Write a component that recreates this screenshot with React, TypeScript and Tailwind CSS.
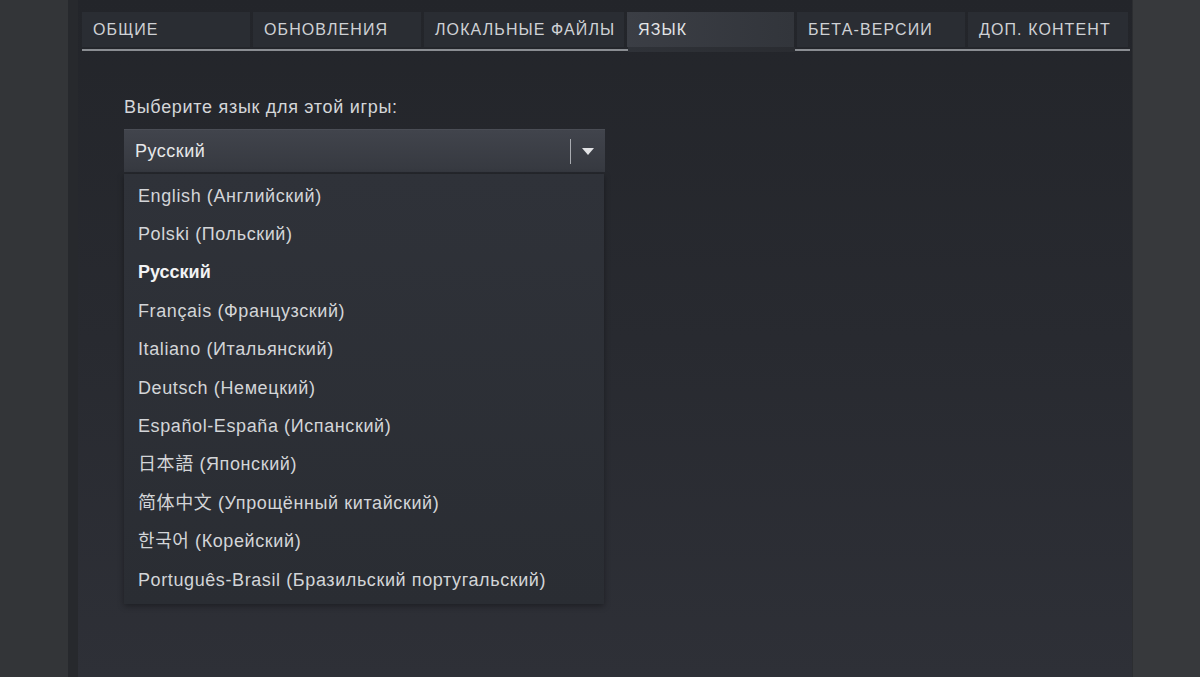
import React from "react";

const tabs = [
  { label: "ОБЩИЕ", w: "w-[168px]" },
  { label: "ОБНОВЛЕНИЯ", w: "w-[168px]" },
  { label: "ЛОКАЛЬНЫЕ ФАЙЛЫ", w: "w-[200px]" },
  { label: "ЯЗЫК", w: "w-[167px]", active: true },
  { label: "БЕТА-ВЕРСИИ", w: "w-[168px]" },
  { label: "ДОП. КОНТЕНТ", w: "w-[160px]" },
];

const langs: { t: string; bold?: boolean }[] = [
  { t: "English (Английский)" },
  { t: "Polski (Польский)" },
  { t: "Русский", bold: true },
  { t: "Français (Французский)" },
  { t: "Italiano (Итальянский)" },
  { t: "Deutsch (Немецкий)" },
  { t: "Español-España (Испанский)" },
  { t: "日本語 (Японский)" },
  { t: "简体中文 (Упрощённый китайский)" },
  { t: "한국어 (Корейский)" },
  { t: "Português-Brasil (Бразильский португальский)" },
];

export default function App() {
  return (
    <div
      className="w-[1200px] h-[677px] flex overflow-hidden bg-[#333538]"
      style={{ fontFamily: '"Liberation Sans", Arial, "Noto Sans CJK SC", "Noto Sans CJK KR", sans-serif' }}
    >
      <div className="w-[68px] shrink-0 bg-[#333538]" />
      <div className="w-[1064px] shrink-0 h-full flex flex-col bg-gradient-to-b from-[#23252a] via-[#282a30] to-[#2e3037] border-l-[10px] border-[#27292d]">
        <div className="pt-[12px] pl-[4px] pr-[2px]">
          <div className="flex gap-[3px]">
            {tabs.map((t) => (
              <div
                key={t.label}
                className={`${t.w} shrink-0 h-[35px] flex items-center pl-[11px] text-[16px] tracking-[1.1px] ${
                  t.active
                    ? "bg-gradient-to-r from-[#3b3e45] to-[#32353b] text-[#e4e5e7]"
                    : "bg-[#2a2d33] text-[#cfd1d5]"
                }`}
              >
                {t.label}
              </div>
            ))}
          </div>
          <div className="flex h-[5px]">
            <div className="w-[546px] h-[2px] mt-[2px] bg-[#8a8d92]" />
            <div className="w-[167px] h-[5px] bg-gradient-to-r from-[#2f3238] to-[#2a2c31]" />
            <div className="flex-1 h-[2px] mt-[2px] bg-[#8a8d92]" />
          </div>
        </div>
        <div className="pl-[46px] pt-[45px]">
          <div className="text-[18px] text-[#d4d6d9] tracking-[0.7px] leading-[20px]">Выберите язык для этой игры:</div>
          <div className="mt-[12px] w-[481px] h-[43px] flex items-center bg-gradient-to-b from-[#41444c] to-[#363940] border-t border-[#4a4d55]">
            <div className="flex-1 pl-[11px] text-[18px] text-[#e6e7e9] tracking-[0.5px]">Русский</div>
            <div className="w-[1px] h-[25px] bg-[#a9acb1]" />
            <div className="w-[34px] flex items-center justify-center">
              <svg width="12" height="7" viewBox="0 0 12 7">
                <path d="M0 0 H12 L6 7 Z" fill="#e2e3e5" />
              </svg>
            </div>
          </div>
          <div className="mt-[2px] w-[480px] h-[430px] pt-[3px] bg-gradient-to-b from-[#2f3239] to-[#2a2d33] shadow-[0_2px_6px_rgba(0,0,0,0.35)]">
            {langs.map((l) => (
              <div
                key={l.t}
                className={`h-[38.4px] flex items-center pl-[14px] text-[18px] ${
                  l.bold ? "font-bold text-[#f2f3f4] tracking-[0px]" : "text-[#d3d5d8] tracking-[0.6px]"
                }`}
              >
                {l.t}
              </div>
            ))}
          </div>
        </div>
      </div>
      <div className="flex-1 bg-[#37393c] border-l border-[#2c2e31]" />
    </div>
  );
}
